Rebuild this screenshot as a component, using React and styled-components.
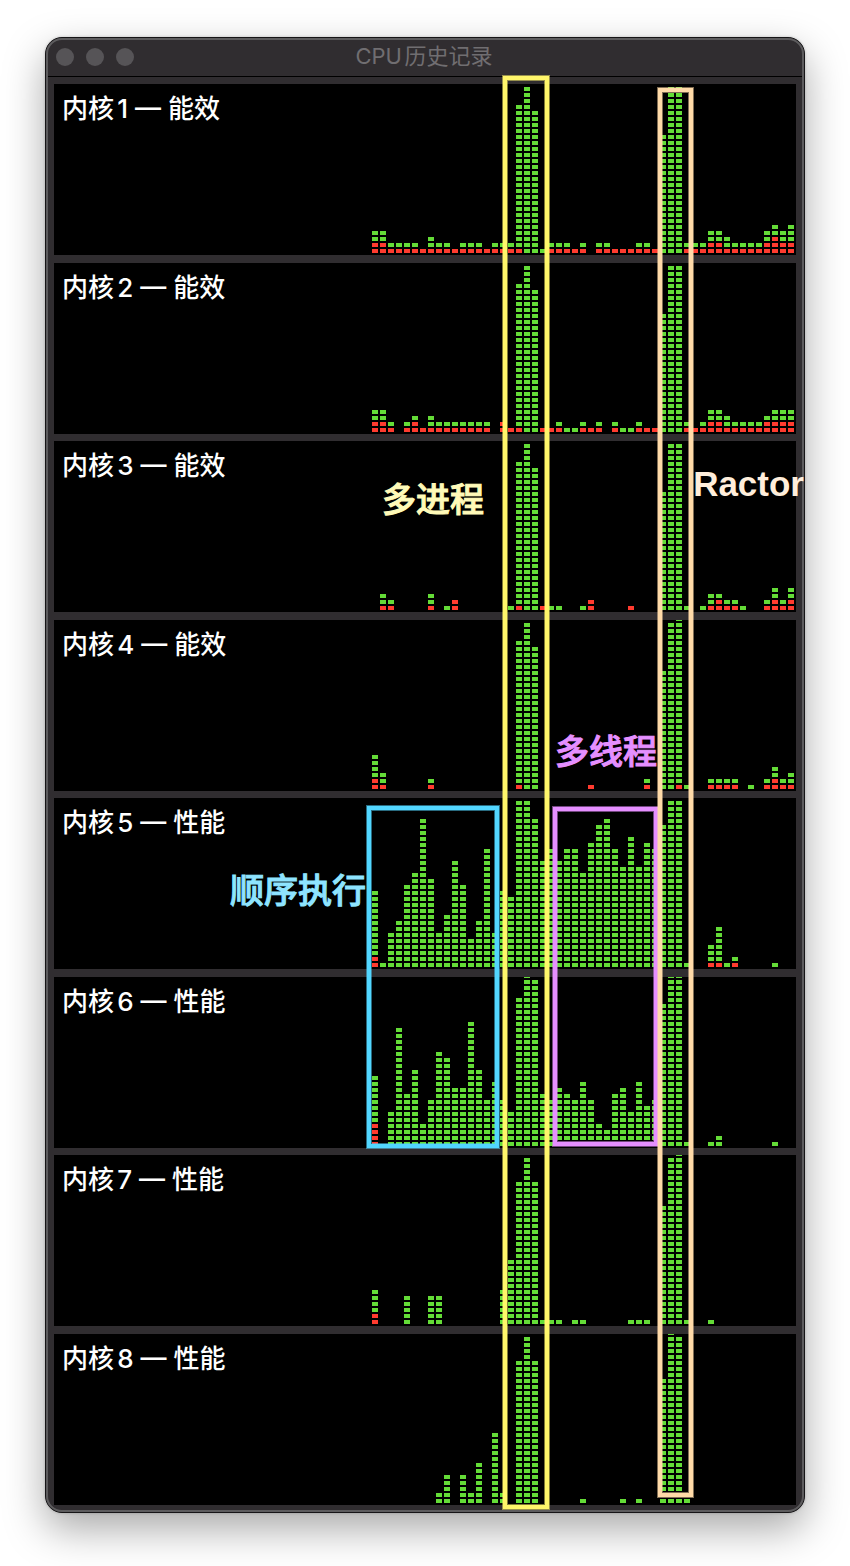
import React from "react";
import styled, { createGlobalStyle } from "styled-components";

const GlobalStyle = createGlobalStyle`
  * { box-sizing: border-box; }
  body { margin: 0; background: #fff; }
`;

const COLUMNS = 53;
const PITCH_X = 8;
const PITCH_Y = 6;
const CHART_WIDTH = COLUMNS * PITCH_X - 2;
const CHART_HEIGHT = 169;

/* One entry per sample: "total" or "total/system"; "NxM" repeats N for M samples. */
const cores = [
  {
    id: 1,
    kind: "能效",
    load: "4/2x2 2/1x4 1/1 3/1 2/1x2 1/1 2/1x3 1/1 2/1x3 25/1 28 24 1 2/1x3 1/1 2/1 0 2/1x2 1/1x3 2/1x2 1/1 20 28x2 2/1x3 4/2x2 3/1 2/1x4 4/2 5/3 4/2 5/2",
  },
  {
    id: 2,
    kind: "能效",
    load: "4/2x2 2/1 0 2/1 3/2 1/1 3/1 2/1x7 0 2/2 1/1 25/1 28 24 1/1x2 2/1 1x2 2/1 1/1 2/1 0 2/1 1x2 2/1 1/1x2 20 28x2 2/1 1/1 2/1 4/2x2 3/1 2/1x4 3/2 4/2x3",
  },
  {
    id: 3,
    kind: "能效",
    load: "0 3/1 2/1 0x4 3/1 0 1 2/2 0x6 1 25/1 28 24 1/1 1x2 0x2 1 2/2 0x4 1/1 0x3 20 28x2 1 0 1 3/1 3/2 2/1x2 1 0x2 2/1 4/2 2/1 4/2",
  },
  {
    id: 4,
    kind: "能效",
    load: "6/2 3/1 0x5 2/1 0x10 25/1 28 24 0x6 1/1 0x6 2/1 0 20 28 29/1 1 0x2 2/1x4 0 1 0 2/1 4/2 2/1 3/1",
  },
  {
    id: 5,
    kind: "性能",
    load: "13/2 1 6 8 14 16 25 15 6 9 18 14 5 8 20 6 13 12 28x2 25 18 20 18 20x2 16 21 24 25 20 17 22 17 21 20 24 28x2 1 0x2 4/1 7/1 1 2/1 0x4 1 0x2",
  },
  {
    id: 6,
    kind: "性能",
    load: "12/4 0 6 20 9 13 4 8 16 15 10x2 21 13 8 11 8 6 25 29 28 9 8 10 9 8 11 8 4 3 9 10 6 11 7 8 24 29x2 1 0x2 1 2 0x6 1 0x2",
  },
  {
    id: 7,
    kind: "性能",
    load: "6/2 0x3 5 0x2 5x2 0x7 6 11 24 28 24 1x3 0 1x2 0x5 1x3 0 20 28 29 1 0x2 1 0x10",
  },
  {
    id: 8,
    kind: "性能",
    load: "0x8 2 5 0 5 2 7 0 12 2 0 24 28 24 0x5 1 0x4 1 0 1 0x2 21 29 28 1 0x13",
  },
];

function parseLoad(text) {
  return text.split(" ").flatMap((token) => {
    const [value, times = "1"] = token.split("x");
    const [total, system = 0] = value.split("/").map(Number);
    return Array.from({ length: Number(times) }, () => ({ total, system }));
  });
}

function blocks(samples, from, to) {
  let d = "";
  samples.forEach((sample, column) => {
    for (let row = from(sample); row < to(sample); row += 1) {
      d += `M${column * PITCH_X} ${CHART_HEIGHT - 4 - row * PITCH_Y}h6v4h-6z`;
    }
  });
  return d;
}

const Page = styled.main`
  padding: 37px 45px 53px;
`;

const Window = styled.section`
  position: relative;
  border: 1px solid #161517;
  border-radius: 17px;
  background: #302d30;
  box-shadow: 0 16px 40px rgba(0, 0, 0, 0.34), 0 0 3px rgba(0, 0, 0, 0.2);

  &::after {
    content: "";
    position: absolute;
    inset: 0;
    border: 2px solid #5d5c5e;
    border-radius: 16px;
    pointer-events: none;
  }
`;

const TitleBar = styled.header`
  display: grid;
  grid-template-columns: 1fr auto 1fr;
  align-items: center;
  height: 39px;
  padding: 0 12px 0 10px;
  border-bottom: 1px solid #000;
`;

const Lights = styled.div`
  display: flex;
  gap: 12px;
`;

const Light = styled.button`
  width: 18px;
  height: 18px;
  padding: 0;
  border: 0;
  border-radius: 50%;
  background: #565457;
`;

const Title = styled.h1`
  margin: 0;
  padding-bottom: 2px;
  color: #706e71;
  font: 400 22px/28px Inter, "Noto Sans CJK SC", sans-serif;
  text-autospace: normal;
`;

const CoreList = styled.div`
  display: flex;
  flex-direction: column;
  padding: 7px 8px;
`;

const Core = styled.article`
  display: flex;
  justify-content: space-between;
  align-items: flex-end;
  height: 171px;
  padding: 0 2px 2px 8px;
  background: #000;

  &:nth-child(even) { margin-top: 8px; }
  &:nth-child(odd):not(:first-child) { margin-top: 7px; }
`;

const CoreName = styled.h2`
  align-self: flex-start;
  margin: 0;
  padding-top: 9px;
  color: #fff;
  font: 500 26px/32px Inter, "Noto Sans CJK SC", sans-serif;
  white-space: nowrap;
  text-autospace: normal;
`;

const Chart = styled.svg`
  flex: none;
  display: block;
`;

const Region = styled.div`
  position: absolute;
  z-index: 1;
  top: ${(p) => p.$top}px;
  right: ${(p) => p.$right}px;
  width: ${(p) => p.$width}px;
  height: ${(p) => p.$height}px;
  border: 4px solid ${(p) => p.$color};
  box-shadow: 0 0 0 1px ${(p) => p.$color}80, inset 0 0 0 1px ${(p) => p.$color}80;
`;

const Note = styled.p`
  position: absolute;
  z-index: 2;
  top: ${(p) => p.$top}px;
  right: ${(p) => p.$right}px;
  margin: 0;
  color: ${(p) => p.$color};
  font: ${(p) => (p.$latin ? "700 35px" : "500 34px")}/40px "Liberation Sans", "Noto Sans CJK SC", sans-serif;
  -webkit-text-stroke: ${(p) => (p.$latin ? 0 : "1px")} currentColor;
  white-space: nowrap;
`;

function CoreHistory({ core }) {
  const samples = parseLoad(core.load);
  const name = `内核${core.id} — ${core.kind}`;
  return (
    <Core>
      <CoreName>{name}</CoreName>
      <Chart width={CHART_WIDTH} height={CHART_HEIGHT} role="img" aria-label={name}>
        <path fill="#64dc37" d={blocks(samples, (s) => s.system, (s) => s.total)} />
        <path fill="#ff3b2f" d={blocks(samples, () => 0, (s) => s.system)} />
      </Chart>
    </Core>
  );
}

export default function App() {
  return (
    <>
      <GlobalStyle />
      <Page>
        <Window>
          <TitleBar>
            <Lights>
              <Light type="button" aria-label="关闭" />
              <Light type="button" aria-label="最小化" />
              <Light type="button" aria-label="缩放" />
            </Lights>
            <Title>CPU历史记录</Title>
          </TitleBar>
          <CoreList>
            {cores.map((core) => (
              <CoreHistory key={core.id} core={core} />
            ))}
          </CoreList>
          <Region $color="#52d6ff" $top={768} $right={305} $width={132} $height={342} />
          <Region $color="#fff66a" $top={38} $right={255} $width={46} $height={1433} />
          <Region $color="#e58fff" $top={769} $right={146} $width={105} $height={339} />
          <Region $color="#ffdaa8" $top={50} $right={111} $width={35} $height={1409} />
          <Note $color="#8ee4ff" $top={833} $right={438}>顺序执行</Note>
          <Note $color="#fffab8" $top={442} $right={320}>多进程</Note>
          <Note $color="#e58fff" $top={694} $right={147}>多线程</Note>
          <Note $color="#ffeedb" $top={426} $right={0} $latin>Ractor</Note>
        </Window>
      </Page>
    </>
  );
}
